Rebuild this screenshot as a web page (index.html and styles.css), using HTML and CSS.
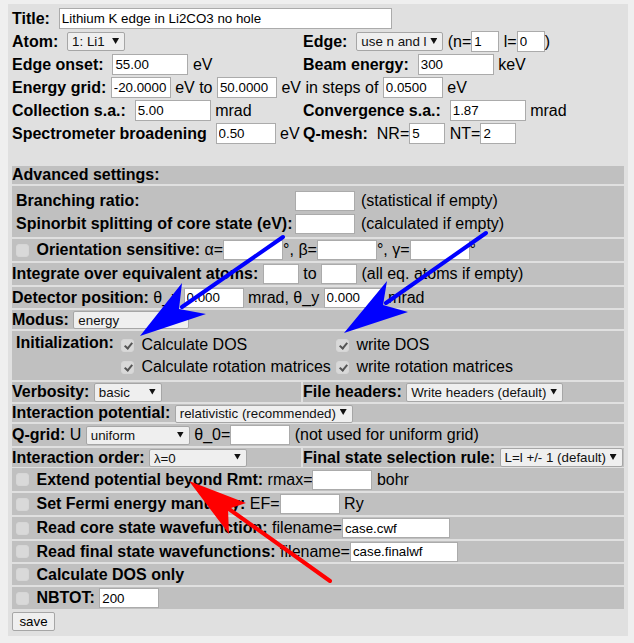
FILE: index.html
```html
<!DOCTYPE html>
<html>
<head>
<meta charset="utf-8">
<title>Initialize TELNES</title>
<link rel="stylesheet" href="styles.css">
</head>
<body>
<form class="panel">
  <div class="basic">
    <div class="cell wide"><b>Title:&nbsp;&nbsp;</b><input class="tx w-title" type="text" value="Lithium K edge in Li2CO3 no hole"></div>

    <div class="cell"><b>Atom:&nbsp;&nbsp;</b><span class="sel w-atom"><select><option>1: Li1</option></select></span></div>
    <div class="cell"><b>Edge:&nbsp;&nbsp;</b><span class="sel w-edge"><select><option>use n and l</option></select></span>&nbsp;(n=<input class="tx w2" type="text" value="1">&nbsp;l=<input class="tx w2" type="text" value="0">)</div>

    <div class="cell"><b>Edge onset:&nbsp;&nbsp;</b><input class="tx w10" type="text" value="55.00">&nbsp;eV</div>
    <div class="cell"><b>Beam energy:&nbsp;&nbsp;</b><input class="tx w10" type="text" value="300">&nbsp;keV</div>

    <div class="cell wide"><b>Energy grid:&nbsp;</b><input class="tx w8" type="text" value="-20.0000">&nbsp;eV to&nbsp;<input class="tx w8" type="text" value="50.0000">&nbsp;eV in steps of&nbsp;<input class="tx w8" type="text" value="0.0500">&nbsp;eV</div>

    <div class="cell"><b>Collection s.a.:&nbsp;&nbsp;</b><input class="tx w10" type="text" value="5.00">&nbsp;mrad</div>
    <div class="cell"><b>Convergence s.a.:&nbsp;&nbsp;</b><input class="tx w10" type="text" value="1.87">&nbsp;mrad</div>

    <div class="cell"><b>Spectrometer broadening&nbsp;&nbsp;</b><input class="tx w8" type="text" value="0.50">&nbsp;eV</div>
    <div class="cell"><b>Q-mesh:&nbsp;&nbsp;</b>NR=<input class="tx w3" type="text" value="5">&nbsp;NT=<input class="tx w3" type="text" value="2"></div>
  </div>

  <div class="adv">
    <div class="bar r18"><b>Advanced settings:</b></div>

    <div class="bar branch">
      <b>Branching ratio:</b><input class="tx w8 h20" type="text" value=""><span class="note">(statistical if empty)</span>
      <b>Spinorbit splitting of core state (eV):</b><input class="tx w8 h20" type="text" value=""><span class="note">(calculated if empty)</span>
    </div>

    <div class="bar r22"><input class="cb" type="checkbox">&nbsp;<b>Orientation sensitive:</b>&nbsp;α=<input class="tx w8 h20" type="text" value="">°, β=<input class="tx w8 h20" type="text" value="">°, γ=<input class="tx w8 h20" type="text" value="">°</div>

    <div class="bar r22"><b>Integrate over equivalent atoms:</b>&nbsp;<input class="tx w3 h20" type="text" value="">&nbsp;to&nbsp;<input class="tx w3 h20" type="text" value="">&nbsp;(all eq. atoms if empty)</div>

    <div class="bar r21"><b>Detector position:</b>&nbsp;θ_x&nbsp;<input class="tx w8 h20" type="text" value="0.000">&nbsp;mrad, θ_y&nbsp;<input class="tx w8 h20" type="text" value="0.000">&nbsp;mrad</div>

    <div class="bar r19"><b>Modus:</b>&nbsp;<span class="sel w-modus"><select><option>energy</option></select></span></div>

    <div class="bar init">
      <b class="init-label">Initialization:</b>
      <span class="opt"><input class="cb" type="checkbox" checked>&nbsp;Calculate DOS</span>
      <span class="opt"><input class="cb" type="checkbox" checked>&nbsp;write DOS</span>
      <span class="opt col2"><input class="cb" type="checkbox" checked>&nbsp;Calculate rotation matrices</span>
      <span class="opt"><input class="cb" type="checkbox" checked>&nbsp;write rotation matrices</span>
    </div>

    <div class="split r20">
      <div class="bar"><b>Verbosity:</b>&nbsp;<span class="sel w-verb"><select><option>basic</option></select></span></div>
      <div class="bar"><b>File headers:</b>&nbsp;<span class="sel w-head"><select><option>Write headers (default)</option></select></span></div>
    </div>

    <div class="bar r18"><b>Interaction potential:</b>&nbsp;<span class="sel w-pot"><select><option>relativistic (recommended)</option></select></span></div>

    <div class="bar r22"><b>Q-grid:</b>&nbsp;U&nbsp;<span class="sel w-grid"><select><option>uniform</option></select></span>&nbsp;θ_0=<input class="tx w8 h20" type="text" value="">&nbsp;(not used for uniform grid)</div>

    <div class="split r18">
      <div class="bar"><b>Interaction order:</b>&nbsp;<span class="sel w-order"><select><option>λ=0</option></select></span></div>
      <div class="bar"><b>Final state selection rule:</b>&nbsp;<span class="sel w-rule"><select><option>L=l +/- 1 (default)</option></select></span></div>
    </div>

    <div class="bar r23"><input class="cb" type="checkbox">&nbsp;<b>Extend potential beyond Rmt:</b>&nbsp;rmax=<input class="tx w8 h20" type="text" value="">&nbsp;bohr</div>
    <div class="bar r22"><input class="cb" type="checkbox">&nbsp;<b>Set Fermi energy manually:</b>&nbsp;EF=<input class="tx w8 h20" type="text" value="">&nbsp;Ry</div>
    <div class="bar r22"><input class="cb" type="checkbox">&nbsp;<b>Read core state wavefunction:</b>&nbsp;filename=<input class="tx w-file h20" type="text" value="case.cwf"></div>
    <div class="bar r21"><input class="cb" type="checkbox">&nbsp;<b>Read final state wavefunctions:</b>&nbsp;filename=<input class="tx w-file h20" type="text" value="case.finalwf"></div>
    <div class="bar r21"><input class="cb" type="checkbox">&nbsp;<b>Calculate DOS only</b></div>
    <div class="bar r22"><input class="cb" type="checkbox">&nbsp;<b>NBTOT:</b>&nbsp;<input class="tx w8 h20" type="text" value="200"></div>
  </div>

  <button class="save" type="button">save</button>
</form>

<svg class="marks" width="634" height="643" viewBox="0 0 634 643" aria-hidden="true">
  <g fill="#0000ff">
    <line x1="283" y1="237" x2="182" y2="307" stroke="#0000ff" stroke-width="4" stroke-linecap="round"/>
    <polygon points="140,336 182,283 179,309 206,314"/>
    <line x1="486" y1="233" x2="386" y2="303" stroke="#0000ff" stroke-width="4" stroke-linecap="round"/>
    <polygon points="344,333 387,281 383,305 408,312"/>
  </g>
  <g fill="#ff0000">
    <line x1="330" y1="581" x2="229" y2="509" stroke="#ff0000" stroke-width="4" stroke-linecap="round"/>
    <polygon points="189,481 246,503 228,509 229,534"/>
  </g>
</svg>
</body>
</html>
```

FILE: styles.css
```css
html, body {
  margin: 0;
  padding: 0;
}

body {
  background: #efefef;
  font-family: "Liberation Sans", Arial, sans-serif;
  font-size: 16px;
  color: #000;
  position: relative;
  width: 634px;
  height: 643px;
  overflow: hidden;
}

b { font-weight: bold; }

.panel {
  box-sizing: border-box;
  width: 620px;
  margin: 4px 0 0 8px;
  padding: 4px 4px 5px 4px;
  background: #e0e0e0;
}

/* ---------- basic settings grid ---------- */
.basic {
  display: grid;
  grid-template-columns: 289px 1fr;
  grid-auto-rows: 21px;
  column-gap: 2px;
  row-gap: 2px;
}

.cell {
  display: flex;
  align-items: center;
  white-space: nowrap;
}

.cell.wide { grid-column: 1 / 3; }

/* ---------- form controls ---------- */
.tx {
  box-sizing: border-box;
  height: 21px;
  margin: 0;
  padding: 1px 2px;
  border: 1px solid #ababab;
  background: #fff;
  font-family: "Liberation Sans", Arial, sans-serif;
  font-size: 13.33px;
  color: #000;
  outline: none;
}

.tx.h20 { height: 20px; }

.w-title { width: 333px; }
.w10 { width: 76px; }
.w8 { width: 60px; }
.w3 { width: 36px; }
.w2 { width: 28px; }
.w-file { width: 108px; }

.sel {
  position: relative;
  display: inline-block;
  height: 19px;
}

.sel select {
  appearance: none;
  -webkit-appearance: none;
  box-sizing: border-box;
  width: 100%;
  height: 100%;
  margin: 0;
  padding: 0 14px 0 4px;
  border: 1px solid #a6a6a6;
  border-radius: 2px;
  background: #efefef;
  font-family: "Liberation Sans", Arial, sans-serif;
  font-size: 13.33px;
  color: #111;
  outline: none;
}

.sel::after {
  content: "";
  position: absolute;
  right: 6px;
  top: 6px;
  width: 7px;
  height: 6px;
  background: #111;
  clip-path: polygon(0 0, 100% 0, 50% 100%);
  pointer-events: none;
}

.w-atom { width: 58px; }
.w-edge { width: 87px; }
.w-modus { width: 116px; height: 18px; }
.w-verb { width: 68px; }
.w-head { width: 157px; }
.w-pot { width: 178px; height: 18px; }
.w-grid { width: 104px; }
.w-order { width: 98px; height: 18px; }
.w-rule { width: 123px; }

.w-modus::after, .w-pot::after, .w-order::after { top: 5px; }

.cb {
  appearance: none;
  -webkit-appearance: none;
  box-sizing: border-box;
  position: relative;
  flex: none;
  width: 13px;
  height: 13px;
  margin: 0 3px 0 4px;
  border: 1px solid #d6d6d6;
  border-radius: 3px;
  background: #d9d9d9;
}

.cb:checked::after {
  content: "";
  position: absolute;
  left: 3.5px;
  top: 1px;
  width: 3px;
  height: 6px;
  border-right: 2px solid #555;
  border-bottom: 2px solid #555;
  transform: rotate(40deg);
}

/* ---------- advanced settings ---------- */
.adv {
  margin-top: 22px;
  display: flex;
  flex-direction: column;
  gap: 2px;
}

.bar {
  background: #c0c0c0;
  display: flex;
  align-items: center;
  white-space: nowrap;
}

.r18 { height: 18px; }
.r19 { height: 19px; }
.r20 { height: 20px; }
.r21 { height: 21px; }
.r22 { height: 22px; }
.r23 { height: 23px; }

.split {
  display: grid;
  grid-template-columns: 289px 1fr;
  column-gap: 2px;
}

.branch {
  display: grid;
  grid-template-columns: 279px 61px auto;
  grid-template-rows: 21px 21px;
  row-gap: 2px;
  align-items: center;
  box-sizing: border-box;
  height: 51px;
  padding: 4px 0 0 4px;
}

.branch .note { margin-left: 5px; }

.init {
  display: grid;
  grid-template-columns: 101px 215px auto;
  grid-template-rows: 22px 22px;
  align-items: center;
  box-sizing: border-box;
  height: 49px;
  padding: 3px 0 0 4px;
}

.init-label {
  align-self: start;
  line-height: 18px;
}

.opt {
  display: flex;
  align-items: center;
}

.opt.col2 { grid-column: 2; }

/* ---------- save ---------- */
.save {
  display: block;
  box-sizing: border-box;
  margin: 3px 0 0 0;
  width: 43px;
  height: 19px;
  padding: 0;
  border: 1px solid #a6a6a6;
  border-radius: 2px;
  background: #efefef;
  font-family: "Liberation Sans", Arial, sans-serif;
  font-size: 13.33px;
  color: #000;
}

/* ---------- annotation arrows ---------- */
.marks {
  position: absolute;
  left: 0;
  top: 0;
  pointer-events: none;
}
```
